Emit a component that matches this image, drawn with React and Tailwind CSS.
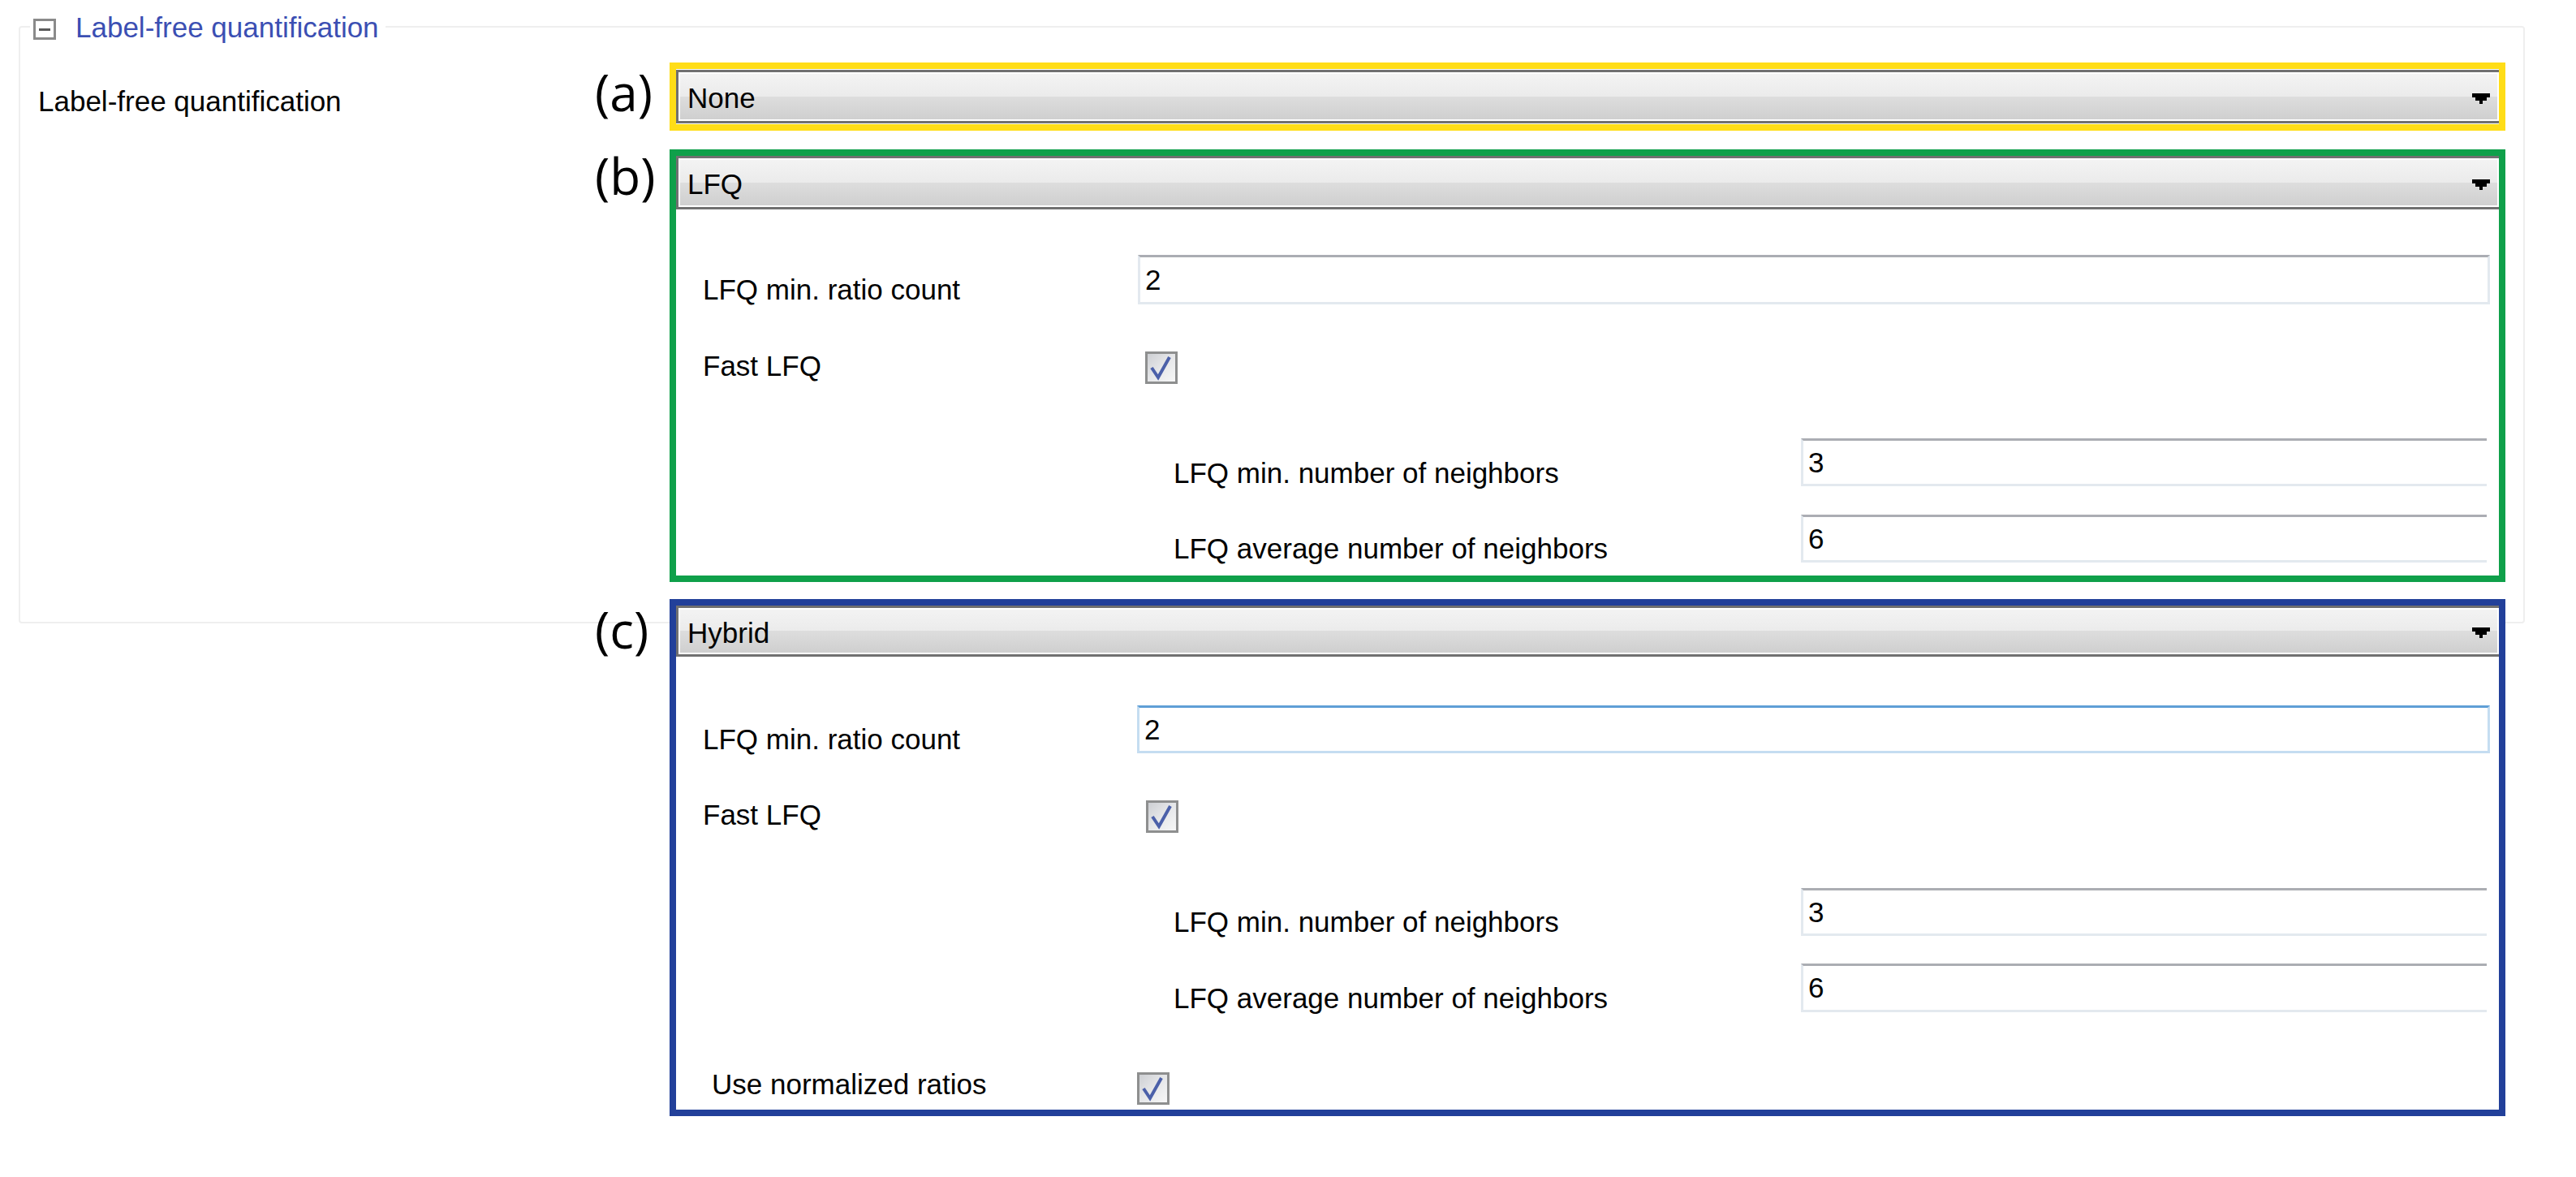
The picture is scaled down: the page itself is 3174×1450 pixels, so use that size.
const combobg = 'bg-[linear-gradient(to_bottom,#f3f3f3_0%,#ebebeb_50%,#dddddd_50%,#cfcfcf_100%)]'

function Arrow() {
  return (
    <svg width="22" height="13" viewBox="0 0 22 13" className="block shrink-0">
      <path d="M0 0H22V5H18V9H13V13H9V9H4V5H0Z" fill="#000" />
    </svg>
  )
}

function Combo({ value, className }) {
  return (
    <div className={`border-[3px] border-r-0 border-[#707070] ${className}`}>
      <div className={`h-full border-2 border-white ${combobg} flex items-center justify-between pl-[9px] pr-[9px] pt-[4px]`}>
        <span className="text-[35px] leading-[40px]">{value}</span>
        <Arrow />
      </div>
    </div>
  )
}

function TextBox({ value, focused, className }) {
  return (
    <div className={`flex items-center pl-[6px] bg-white border-[3px] text-[35px] leading-[40px] ${focused ? 'border-[#c5ddf1] border-t-[#5f9fd6]' : 'border-[#e3e9ef] border-t-[#abadb3]'} ${className}`}>
      {value}
    </div>
  )
}

function CheckBox() {
  return (
    <div className="w-[40px] h-[40px] shrink-0 border-[3px] border-[#8e8f8f] bg-[linear-gradient(135deg,#cdcfd3_0%,#e6e7e9_50%,#f7f7f7_100%)]">
      <svg viewBox="0 0 34 34" className="block w-full h-full">
        <path d="M5 17 L13 29 L27 4" stroke="#4b60a9" strokeWidth="4" fill="none" />
      </svg>
    </div>
  )
}

// label line box is kept short so it never makes a row taller than its control
function Label({ children, className }) {
  return <div className={`shrink-0 h-[34px] whitespace-nowrap text-[35px] leading-[40px] ${className}`}>{children}</div>
}

function Marker({ children, className }) {
  return (
    <div className={`w-[95px] shrink-0 pl-[3px] font-['Open_Sans',sans-serif] text-[62px] leading-none text-black ${className}`}>
      {children}
    </div>
  )
}

export default function App() {
  return (
    <div className="w-[3174px] h-[1450px] overflow-hidden bg-white pt-[32px] pl-[23px] font-['Liberation_Sans',Arial,sans-serif] text-black">
      {/* group box */}
      <div className="relative w-[3088px] border-2 border-[#efefef] rounded-[4px]">
        <div className="absolute left-[12px] -top-[20px] flex items-start bg-white pl-[4px] pr-[8px]">
          <div className="mt-[9px] w-[28px] h-[26px] border-[3px] border-[#8a8a8a] flex items-center justify-center">
            <div className="w-[14px] h-[3px] bg-[#5a5a5a]" />
          </div>
          <span className="ml-[24px] text-[35px] leading-[40px] text-[#3b4fb3]">Label-free quantification</span>
        </div>

        <div className="flex">
          <Label className="w-[705px] pl-[22px] mt-[71px]">Label-free quantification</Label>
          <div className="pt-[43px] pb-[49px]">
            <div className="flex items-start">
              <Marker className="mt-[5px]">(a)</Marker>
              <div className="w-[2262px] border-[8px] border-[#ffdd17] py-[1px] bg-white">
                <Combo value="None" className="h-[66px]" />
              </div>
            </div>

            <div className="flex items-start mt-[23px]">
              <Marker className="mt-[1px]">(b)</Marker>
              <div className="w-[2262px] border-[8px] border-[#0fa04a] bg-white">
                <Combo value="LFQ" className="h-[66px]" />
                <div className="pl-[33px] pr-[11px] pb-[16px]">
                  <div className="flex items-start mt-[56px]">
                    <Label className="w-[536px] mt-[23px]">LFQ min. ratio count</Label>
                    <TextBox value="2" className="flex-1 h-[61px]" />
                  </div>
                  <div className="flex items-start mt-[58px]">
                    <Label className="w-[545px] -mt-[2px]">Fast LFQ</Label>
                    <CheckBox />
                  </div>
                  <div className="flex items-start mt-[67px] pl-[580px] pr-[4px]">
                    <Label className="w-[773px] mt-[23px]">LFQ min. number of neighbors</Label>
                    <TextBox value="3" className="flex-1 h-[59px] border-r-0" />
                  </div>
                  <div className="flex items-start mt-[35px] pl-[580px] pr-[4px]">
                    <Label className="w-[773px] mt-[22px]">LFQ average number of neighbors</Label>
                    <TextBox value="6" className="flex-1 h-[59px] border-r-0" />
                  </div>
                </div>
              </div>
            </div>
          </div>
        </div>
      </div>

      {/* hybrid panel, overlapping the group box edge */}
      <div className="relative z-10 flex items-start ml-[707px] -mt-[30px]">
        <Marker className="mt-[6px]">(c)</Marker>
        <div className="w-[2262px] border-[8px] border-[#22409a] bg-white">
          <Combo value="Hybrid" className="h-[63px]" />
          <div className="pl-[33px] pr-[11px] pb-[6px]">
            <div className="flex items-start mt-[60px]">
              <Label className="w-[535px] mt-[22px]">LFQ min. ratio count</Label>
              <TextBox value="2" focused className="flex-1 h-[59px]" />
            </div>
            <div className="flex items-start mt-[58px]">
              <Label className="w-[546px] -mt-[2px]">Fast LFQ</Label>
              <CheckBox />
            </div>
            <div className="flex items-start mt-[68px] pl-[580px] pr-[4px]">
              <Label className="w-[773px] mt-[22px]">LFQ min. number of neighbors</Label>
              <TextBox value="3" className="flex-1 h-[59px] border-r-0" />
            </div>
            <div className="flex items-start mt-[34px] pl-[580px] pr-[4px]">
              <Label className="w-[773px] mt-[23px]">LFQ average number of neighbors</Label>
              <TextBox value="6" className="flex-1 h-[60px] border-r-0" />
            </div>
            <div className="flex items-start mt-[74px]">
              <Label className="w-[535px] pl-[11px] -mt-[5px]">Use normalized ratios</Label>
              <CheckBox />
            </div>
          </div>
        </div>
      </div>
    </div>
  )
}
